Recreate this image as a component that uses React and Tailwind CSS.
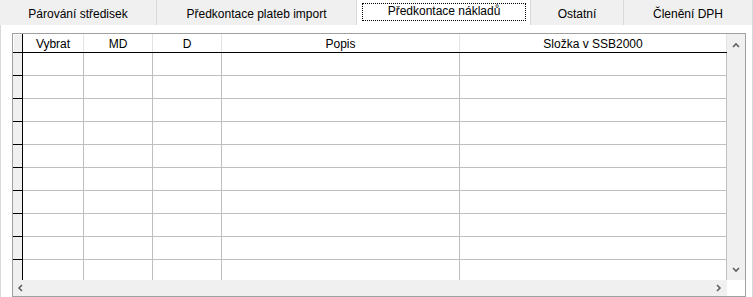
import React from "react";

const cols = [
  { w: "w-[61px]", label: "Vybrat" },
  { w: "w-[69px]", label: "MD" },
  { w: "w-[69px]", label: "D" },
  { w: "w-[238px]", label: "Popis" },
  { w: "w-[267px]", label: "Složka v SSB2000" },
];

const rows = [23, 23, 23, 23, 23, 23, 23, 23, 23];

function Chevron({ dir }) {
  const paths = {
    up: "M1 5 L4 2 L7 5",
    down: "M1 2 L4 5 L7 2",
    left: "M5 1 L2 4 L5 7",
    right: "M2 1 L5 4 L2 7",
  };
  return (
    <svg width="8" height="8" viewBox="0 0 8 8" className="block">
      <path d={paths[dir]} fill="none" stroke="#606060" strokeWidth="1.6" />
    </svg>
  );
}

export default function App() {
  return (
    <div className="w-[753px] h-[297px] overflow-hidden bg-white font-['Liberation_Sans',Arial,sans-serif] text-[12px] leading-[14px] text-black">
      {/* Tabs */}
      <div className="flex h-[25px]">
        <div className="w-[157px] bg-[#f0f0f0] border-r border-[#d9d9d9] flex justify-center pt-[7px]">
          Párování středisek
        </div>
        <div className="w-[200px] bg-[#f0f0f0] border-r border-[#d9d9d9] flex justify-center pt-[7px]">
          Předkontace plateb import
        </div>
        <div className="w-[173px] bg-white pl-[5px] pr-[4px] pt-[3px]">
          <div className="h-[18px] border border-dotted border-black flex justify-center">
            Předkontace nákladů
          </div>
        </div>
        <div className="w-[94px] bg-[#f0f0f0] border-l border-r border-[#d9d9d9] flex justify-center pt-[7px]">
          Ostatní
        </div>
        <div className="w-[129px] bg-[#f0f0f0] border-r border-[#d9d9d9] flex justify-center pt-[7px]">
          Členění DPH
        </div>
      </div>

      {/* Panel */}
      <div className="h-[272px] border-l border-r border-[#d9d9d9] pl-[11px] pt-[8px] pr-[6px]">
        <div className="w-[734px] h-[264px] border border-[#a0a0a0] flex flex-col">
          <div className="flex h-[246px]">
            {/* Table area */}
            <div className="w-[714px] flex flex-col overflow-hidden">
              {/* Header */}
              <div className="flex h-[19px] border-b border-black">
                <div className="w-[10px] h-full bg-[#f0f0f0] border-r border-black shadow-[inset_1px_1px_0_#ffffff]" />
                {cols.map((c, i) => (
                  <div
                    key={i}
                    className={`${c.w} h-full border-r border-[#e3e3e3] flex justify-center pt-[3px]`}
                  >
                    {c.label}
                  </div>
                ))}
              </div>
              {/* Rows */}
              {rows.map((h, r) => (
                <div key={r} className="flex h-[23px]">
                  <div className="w-[10px] h-full bg-[#f0f0f0] border-r border-b border-black" />
                  {cols.map((c, i) => (
                    <div
                      key={i}
                      className={`${c.w} h-full border-r border-b border-[#bfbfbf]`}
                    />
                  ))}
                </div>
              ))}
              <div className="flex h-[20px]">
                <div className="w-[10px] h-full bg-[#f0f0f0] border-r border-black" />
                {cols.map((c, i) => (
                  <div key={i} className={`${c.w} h-full border-r border-[#bfbfbf]`} />
                ))}
              </div>
            </div>
            {/* Vertical scrollbar */}
            <div className="w-[18px] h-full bg-[#f0f0f0] flex flex-col justify-between items-center pt-[8px] pb-[6px]">
              <Chevron dir="up" />
              <Chevron dir="down" />
            </div>
          </div>
          {/* Horizontal scrollbar row */}
          <div className="flex h-[16px]">
            <div className="w-[714px] h-full bg-[#f0f0f0] flex justify-between items-center pl-[4px] pr-[4px]">
              <Chevron dir="left" />
              <Chevron dir="right" />
            </div>
            <div className="w-[18px] h-full bg-white" />
          </div>
        </div>
      </div>
    </div>
  );
}
